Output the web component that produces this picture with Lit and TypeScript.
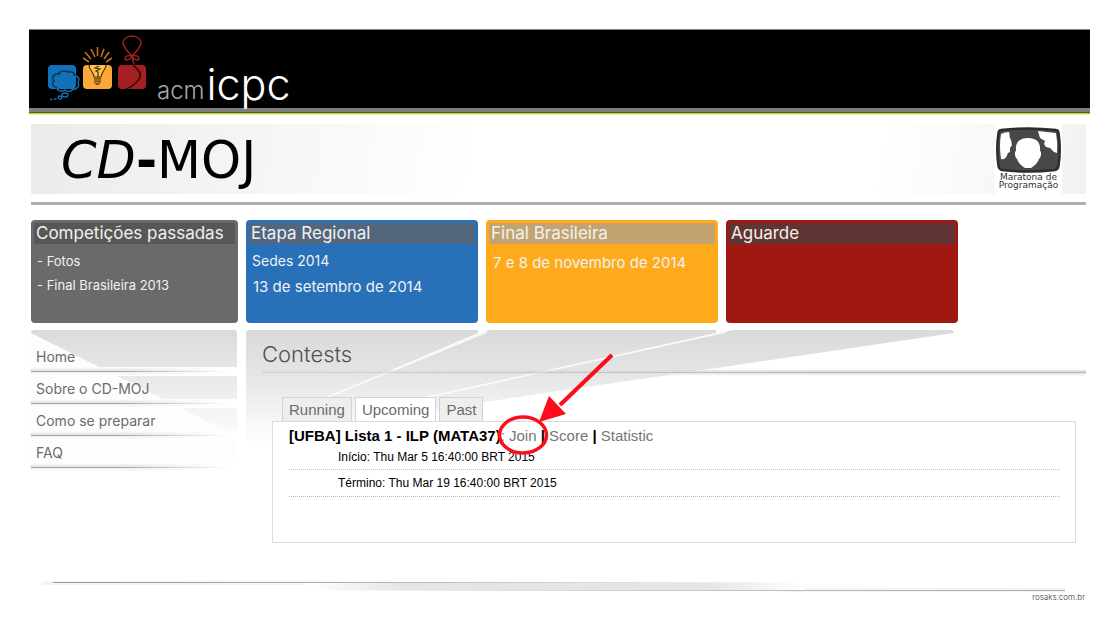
import { LitElement, html, css, svg } from "lit";
import { customElement, state } from "lit/decorators.js";

interface Stage {
  title: string;
  tone: string;
  links: string[];
  date?: string;
}

const STAGES: Stage[] = [
  { title: "Competições passadas", tone: "past", links: ["- Fotos", "- Final Brasileira 2013"] },
  { title: "Etapa Regional", tone: "regional", links: ["Sedes 2014"], date: "13 de setembro de 2014" },
  { title: "Final Brasileira", tone: "final", links: [], date: "7 e 8 de novembro de 2014" },
  { title: "Aguarde", tone: "wait", links: [] },
];

const MENU = ["Home", "Sobre o CD-MOJ", "Como se preparar", "FAQ"];
const TABS = ["Running", "Upcoming", "Past"];

// Thought cloud, light bulb and balloon: the three tiles of the contest logo.
const logo = svg`
  <rect x="0" y="33" width="28" height="24" rx="4" fill="#1272b8"/>
  <path d="M9 56c-4-1-6-5-3-7-3-3 0-8 5-7 1-4 7-3 9-2 4-1 7 1 7 4 4 0 5 4 3 6 2 4-1 8-5 7-2 3-6 3-8 1-3 2-8 1-8-2z" fill="none" stroke="#1272b8" stroke-width="1.500"/>
  <path d="M9 56c-4-1-6-5-3-7-3-3 0-8 5-7 1-4 7-3 9-2 4-1 7 1 7 4" fill="none" stroke="#0b3558" stroke-width="1.500"/>
  <g fill="none" stroke="#1272b8" stroke-width="1.300"><ellipse cx="17" cy="63" rx="3" ry="2"/><ellipse cx="12" cy="65.500" rx="2" ry="1.500"/><path d="M2 67.500h2.500M6 67h2.500"/></g>
  <rect x="35" y="33" width="29" height="24" rx="4" fill="#fba73a"/>
  <g stroke="#b8741c" stroke-width="1.600"><path d="M35 26l6 4M37 20l6 7M43 17l4 8M49.500 15v9M56 17l-3 8M61 20l-5 7M64 26l-6 4"/></g>
  <path d="M41 33c0 5 5 7 5 12h7c0-5 5-7 5-12z" fill="#fdc64a"/>
  <path d="M41 33c0 5 5 7 5 12h7c0-5 5-7 5-12M51 34l-4 2 5 1-4 2 2 1v5" fill="none" stroke="#49300f" stroke-width="1.200"/>
  <path d="M46 46h7v4l-2 3h-3l-2-3z" fill="#855414"/>
  <path d="M46 48h7M47 50.500h5" stroke="#e39a39" stroke-width=".7"/>
  <rect x="70" y="33" width="28" height="24" rx="4" fill="#a51f22"/>
  <path d="M84 24C79 19 75 15 75 10a9.300 8 0 0 1 18 0c0 5-4 9-9 14M84 24c-4-1-7 0-7 2.500s5 2 7-2c2 4 7 4.500 7 2s-3-3.500-7-2.500l2 9" fill="none" stroke="#a51f22" stroke-width="1.400"/>
  <path d="M85 33c5 5 10 9 6 14-3 5-8 8-13 10" fill="none" stroke="#200506" stroke-width="1.400"/>`;

@customElement("app-root")
export class AppRoot extends LitElement {
  @state() private tab = "Upcoming";

  static styles = css`
    :host {
      display: block;
      min-height: 100vh;
      box-sizing: border-box;
      padding: 29px 26px 16px 29px;
      background: #fff;
      color: #000;
      font-family: "Liberation Sans", Arial, sans-serif;
    }
    *, *::before, *::after { box-sizing: border-box; }
    h1, h2, h3, p, ul { margin: 0; padding: 0; font-weight: 400; }
    ul { list-style: none; }
    a { color: inherit; text-decoration: none; }
    .top {
      display: flex;
      height: 79px;
      padding-left: 19px;
      background: #000;
      border-top: 1px solid #858585;
    }
    .logo { width: 109px; height: 76px; flex: none; margin-top: 2px; }
    .acm, .icpc { font-family: Inter, sans-serif; font-weight: 300; }
    .acm { padding-top: 46px; font-size: 24px; line-height: 30px; color: #a7a7a7; }
    .icpc { padding: 29px 0 0 2px; font-size: 43px; line-height: 50px; color: #fff; }
    .stripe { height: 7px; background: linear-gradient(#7f7f7f 0 4px, #27702f 4px 5px, #dfc02c 5px 6px, #fbe9a8 6px 7px); }
    .wrap { padding: 9px 4px 0 2px; }
    .title {
      display: flex;
      justify-content: space-between;
      height: 70px;
      padding-left: 30px;
      background: linear-gradient(100deg, #ebebeb, #fff 42%, #fff 80%, #f2f2f2);
    }
    .title h1 { font: 51px/73px "DejaVu Sans", sans-serif; white-space: nowrap; }
    .badge { display: flex; flex-direction: column; align-items: center; width: 67px; margin-right: 24px; background: #fff; padding-top: 3px; }
    .badge svg { width: 65px; height: 46px; }
    .badge span { font: 9px/8px "DejaVu Sans", sans-serif; color: #333; }
    .rule { height: 3px; margin-top: 8px; background: #b0b0b0; }
    .stages {
      display: grid;
      grid-template-columns: 207px repeat(3, minmax(0, 232px));
      column-gap: 8px;
      margin-top: 15px;
      font-family: Inter, sans-serif;
      font-weight: 300;
      color: #f1f1f1;
    }
    .stage { height: 103px; padding: 3px; border-radius: 4px; }
    .stage h2 { height: 21px; margin-bottom: 5px; padding-left: 2px; font-size: 17px; line-height: 20px; white-space: nowrap; }
    .stage p { padding-left: 3px; font-size: 14px; line-height: 24px; white-space: nowrap; }
    .stage .date { padding-left: 4px; font-size: 15px; line-height: 28px; }
    .past { background: #6a6a6a; }
    .past h2 { background: #575757; }
    .past p { font-size: 13px; }
    .regional { background: #2870b8; }
    .regional h2 { background: #52677d; }
    .final { background: #ffaa1a; }
    .final h2 { background: #c2a473; }
    .wait { background: #9f1812; }
    .wait h2 { background: #603432; }
    .body { display: grid; grid-template-columns: 206px minmax(0, 1fr); column-gap: 9px; padding-top: 7px; }
    .menu { position: relative; height: 142px; font-family: Inter, sans-serif; font-weight: 300; }
    .menu-bg { position: absolute; inset: 0; width: 206px; height: 142px; }
    .menu ul { position: relative; padding-top: 5px; }
    .menu li { height: 32px; }
    .menu a { display: block; padding: 11px 0 0 5px; height: 32px; font-size: 14px; line-height: 22px; color: #6b6b6b; }
    .menu li::after {
      content: "";
      display: block;
      height: 9px;
      background:
        linear-gradient(90deg, transparent 45%, #fff 97%),
        linear-gradient(#fff, #e4e4e4 40%, #a8a8a8 42% 50%, #eee 54%, #fff);
    }
    .main { position: relative; min-height: 249px; padding-left: 16px; }
    .beams { position: absolute; left: 0; top: 0; width: 712px; height: 120px; }
    .content { position: relative; }
    .content h2 { padding-top: 9px; font: 300 22px/30px Inter, sans-serif; color: #505050; }
    .underline {
      height: 7px;
      background: linear-gradient(transparent, #d6d6d6 40%, #b3b8b8 45% 58%, #e3e3e3 62%, transparent);
      mask-image: linear-gradient(90deg, #0005, #000 70%);
    }
    .tabs { display: flex; gap: 3px; padding: 21px 0 0 20px; }
    .tabs button {
      height: 24px;
      padding: 0 6px;
      border: 1px solid #d3d3d3;
      border-bottom: 0;
      background: #eee;
      font: 15px/22px "Liberation Sans", Arial, sans-serif;
      color: #6b6b6b;
      cursor: pointer;
    }
    .tabs button.active { background: #fff; }
    .panel { margin: 0 10px; padding: 4px 15px 45px 16px; border: 1px solid #dcdcdc; background: #fff; }
    .panel h3 { font-size: 15px; line-height: 19px; font-weight: 700; white-space: nowrap; }
    .panel h3 a, .panel h3 span { font-weight: 400; color: #767676; }
    .panel p { padding-left: 49px; height: 27px; border-bottom: 1px dotted #bbb; font-size: 12px; line-height: 26px; }
    .panel h3 + p { height: 25px; line-height: 25px; }
    .mark { position: absolute; left: 246px; top: 20px; width: 126px; height: 110px; pointer-events: none; }
    footer { display: flex; flex-direction: column; padding: 0 1px 0 12px; }
    footer svg { width: 100%; height: 14px; }
    footer a { align-self: flex-end; font: 300 8px/8px Inter, sans-serif; color: #333; }
  `;

  render() {
    return html`
      <header>
        <div class="top">
          <svg class="logo" viewBox="0 0 109 76" aria-hidden="true">${logo}</svg>
          <span class="acm">acm</span><span class="icpc">icpc</span>
        </div>
        <div class="stripe"></div>
      </header>
      <div class="wrap">
        <div class="title">
          <h1><i>CD</i><b>-</b>MOJ</h1>
          <div class="badge">
            <svg viewBox="0 0 65 46" aria-hidden="true">
              <path d="M5 3Q32 0 60 3 62 3 62.500 6 65 22 62.500 39 62 42 59 43 32 46 6 43 3 42 2.500 39 0 22 2.500 6 3 3 5 3z" fill="#484848" stroke="#2d2d2d" stroke-width="2.500"/>
              <path d="M5 7Q9 5 13 5c1 3 0 5 2 8l1 5-2 3v4l-2 1c-2 5-3 7-7 6Q3 18 5 7z" fill="#fff"/>
              <path d="M42 4l18 2q2 10 1 20l-3-1-4-4-4-1-2-3 1-3-5-3z" fill="#fff"/>
              <path d="M20 24c-1-9 4-13 12-13s13 4 12 13c2 0 1 7-1 8-2 5-5 7-8 9h-6c-3-2-6-4-8-9-2-1-3-8-1-8z" fill="#fff"/>
            </svg>
            <span>Maratona de</span><span>Programação</span>
          </div>
        </div>
        <div class="rule"></div>

        <section class="stages">
          ${STAGES.map(
            (s) => html`<article class="stage ${s.tone}">
              <h2>${s.title}</h2>
              ${s.links.map((l) => html`<p><a href="#">${l}</a></p>`)}
              ${s.date ? html`<p class="date">${s.date}</p>` : null}
            </article>`
          )}
        </section>

        <div class="body">
          <nav class="menu">
            <svg class="menu-bg" viewBox="0 0 206 142" aria-hidden="true">
              <defs>
                <linearGradient id="m" x1="0" y1="0" x2="0" y2="1">
                  <stop stop-color="#dbdadb"/><stop offset="1" stop-color="#fdfcfd"/>
                </linearGradient>
              </defs>
              <rect width="206" height="142" fill="#fefdfe"/>
              <path d="M0 3Q0 0 3 0H203Q206 0 206 3V106z" fill="url(#m)"/>
            </svg>
            <ul>${MENU.map((m) => html`<li><a href="#">${m}</a></li>`)}</ul>
          </nav>

          <main class="main">
            <svg class="beams" viewBox="0 0 712 120" aria-hidden="true">
              <defs>
                <linearGradient id="b" gradientUnits="userSpaceOnUse" x1="0" y1="0" x2="0" y2="115">
                  <stop stop-color="#dbdadb"/><stop offset=".3" stop-color="#e3e2e3"/><stop offset="1" stop-color="#fff"/>
                </linearGradient>
              </defs>
              <path d="M0 3Q0 0 3 0H705Q708 0 708 3L232 73 150 86V115H0z" fill="url(#b)"/>
              <path d="M232 3V0h11L87 65zM470 3V0h17L194 64z" fill="#fff"/>
              <path d="M241 2L77 69M480 2L182 67" stroke="#fff" stroke-width="1.500" opacity=".8"/>
            </svg>
            <div class="content">
              <h2>Contests</h2>
              <div class="underline"></div>
              <div class="tabs" role="tablist">
                ${TABS.map(
                  (t) => html`<button
                    role="tab"
                    aria-selected=${t === this.tab}
                    class=${t === this.tab ? "active" : ""}
                    @click=${() => (this.tab = t)}
                  >${t}</button>`
                )}
              </div>
              <div class="panel">
                <h3>[UFBA] Lista 1 - ILP (MATA37)<span>: </span><a href="#">Join</a> | <a href="#">Score</a> | <a href="#">Statistic</a></h3>
                <p>Início: Thu Mar 5 16:40:00 BRT 2015</p>
                <p>Término: Thu Mar 19 16:40:00 BRT 2015</p>
              </div>
            </div>
            <svg class="mark" viewBox="0 0 126 110" aria-hidden="true">
              <ellipse cx="31" cy="85" rx="23.500" ry="18" fill="none" stroke="#fb0d1b" stroke-width="3.500"/>
              <path d="M120 5L68 55" stroke="#fb0d1b" stroke-width="4"/>
              <path d="M47 72L57 46 74 64z" fill="#fb0d1b"/>
            </svg>
          </main>
        </div>

        <footer>
          <svg viewBox="0 0 1042 14" preserveAspectRatio="none" aria-hidden="true">
            <defs>
              <linearGradient id="f1"><stop stop-color="#999"/><stop offset=".5" stop-color="#bbb"/><stop offset="1" stop-color="#fff"/></linearGradient>
              <linearGradient id="f2"><stop stop-color="#fff"/><stop offset=".5" stop-color="#c4c4c4"/><stop offset="1" stop-color="#aaa"/></linearGradient>
              <linearGradient id="f3"><stop stop-color="#fff"/><stop offset=".2" stop-color="#e5e5e5"/><stop offset=".8" stop-color="#e5e5e5"/><stop offset="1" stop-color="#fff"/></linearGradient>
            </defs>
            <rect y="2" width="300" height="4" fill="#f4f4f4"/>
            <rect x="740" y="9" width="282" height="4" fill="#f4f4f4"/>
            <rect x="262" y="4" width="500" height="8" fill="url(#f3)"/>
            <rect x="10" y="3" width="750" height="1" fill="url(#f1)"/>
            <rect x="270" y="11" width="752" height="1" fill="url(#f2)"/>
          </svg>
          <a href="#">rosaks.com.br</a>
        </footer>
      </div>
    `;
  }
}
